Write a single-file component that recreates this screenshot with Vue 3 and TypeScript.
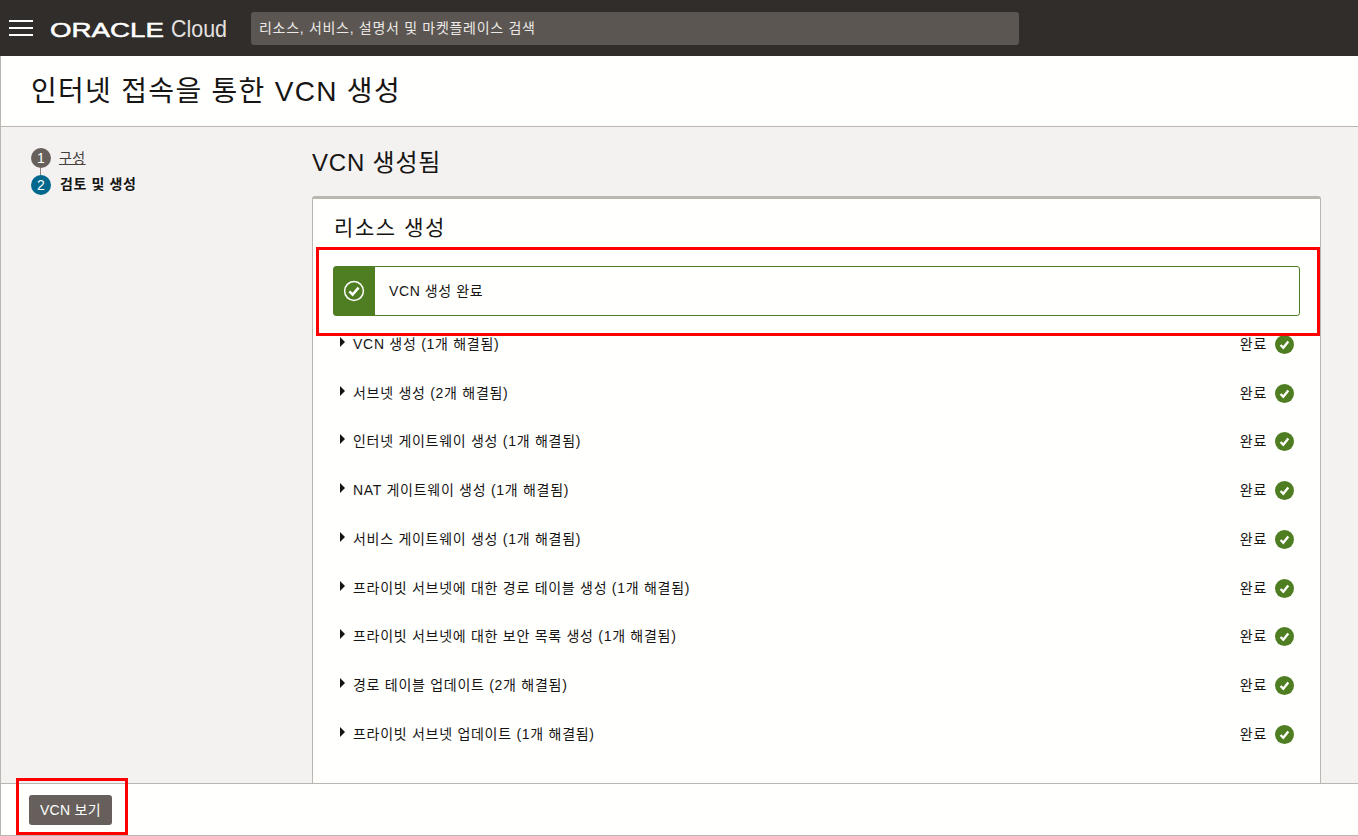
<template>
  <div class="page">
    <header class="topbar">
      <button class="menu-button" type="button" aria-label="메뉴">
        <span></span><span></span><span></span>
      </button>
      <svg class="logo" width="184" height="30" viewBox="0 0 184 30" role="img" aria-label="ORACLE Cloud">
        <text x="0" y="23" textLength="114" lengthAdjust="spacingAndGlyphs" class="logo-oracle">ORACLE</text>
        <text x="121" y="23" textLength="56" lengthAdjust="spacingAndGlyphs" class="logo-cloud">Cloud</text>
      </svg>
      <div class="search">리소스, 서비스, 설명서 및 마켓플레이스 검색</div>
    </header>

    <div class="content">
      <div class="page-title">
        <h1>인터넷 접속을 통한 VCN 생성</h1>
      </div>

      <div class="workspace">
        <nav class="steps">
          <div class="step">
            <span class="step-num done">1</span>
            <a class="step-link">구성</a>
          </div>
          <div class="step-line"></div>
          <div class="step">
            <span class="step-num current">2</span>
            <strong>검토 및 생성</strong>
          </div>
        </nav>

        <main class="main">
          <h2>VCN 생성됨</h2>
          <section class="card">
            <h3>리소스 생성</h3>
            <div class="banner">
              <div class="banner-icon">
                <svg width="22" height="22" viewBox="0 0 22 22" aria-hidden="true">
                  <circle cx="11" cy="11" r="9.4" fill="none" stroke="#fff" stroke-width="1.5" />
                  <path d="M6.4 11.4l3.2 3.2 6-7" fill="none" stroke="#fff" stroke-width="2.5" />
                </svg>
              </div>
              <div class="banner-text">VCN 생성 완료</div>
            </div>
            <ul class="rows">
              <li v-for="row in rows" :key="row" class="row">
                <span class="caret"></span>
                <span class="row-label">{{ row }}</span>
                <span class="row-status">완료</span>
                <svg class="row-check" width="19" height="19" viewBox="0 0 19 19" aria-hidden="true">
                  <circle cx="9.5" cy="9.5" r="9.5" fill="#4f7d21" />
                  <path d="M5.6 10l2.7 2.8 5-6.2" fill="none" stroke="#fff" stroke-width="2.4" />
                </svg>
              </li>
            </ul>
          </section>
        </main>
      </div>

      <footer class="footer">
        <button class="view-button" type="button">VCN 보기</button>
      </footer>
    </div>

    <div class="mark mark-banner"></div>
    <div class="mark mark-button"></div>
  </div>
</template>

<script setup lang="ts">
const rows: string[] = [
  'VCN 생성 (1개 해결됨)',
  '서브넷 생성 (2개 해결됨)',
  '인터넷 게이트웨이 생성 (1개 해결됨)',
  'NAT 게이트웨이 생성 (1개 해결됨)',
  '서비스 게이트웨이 생성 (1개 해결됨)',
  '프라이빗 서브넷에 대한 경로 테이블 생성 (1개 해결됨)',
  '프라이빗 서브넷에 대한 보안 목록 생성 (1개 해결됨)',
  '경로 테이블 업데이트 (2개 해결됨)',
  '프라이빗 서브넷 업데이트 (1개 해결됨)'
]
</script>

<style>
html,
body {
  margin: 0;
  overflow: hidden;
}
</style>

<style scoped>
.page {
  position: relative;
  display: flex;
  flex-direction: column;
  width: 1358px;
  height: 836px;
  overflow: hidden;
  background: #f3f2f1;
  color: #161513;
  font-family: "Liberation Sans", "Noto Sans CJK KR", sans-serif;
}

.topbar {
  display: flex;
  align-items: center;
  flex: 0 0 56px;
  box-sizing: border-box;
  background: #312d2a;
}

.menu-button {
  display: flex;
  flex-direction: column;
  gap: 5px;
  width: 24px;
  margin-left: 9px;
  padding: 0;
  border: none;
  background: none;
}

.menu-button span {
  display: block;
  height: 2px;
  background: #fff;
}

.logo {
  flex: none;
  margin-left: 17px;
  margin-top: 2px;
  margin-right: -6px;
}

.logo-oracle {
  fill: #fff;
  stroke: #fff;
  stroke-width: 0.5;
  font-family: "Liberation Sans", sans-serif;
  font-size: 20px;
}

.logo-cloud {
  fill: #e4e2e0;
  font-family: "Liberation Sans", sans-serif;
  font-size: 24px;
}

.search {
  width: 768px;
  height: 33px;
  box-sizing: border-box;
  margin-left: 23px;
  padding: 0 8px;
  border-radius: 3px;
  background: #5b5652;
  color: #ece9e6;
  font-size: 14px;
  letter-spacing: 0.7px;
  line-height: 33px;
}

.content {
  display: flex;
  flex: 1;
  flex-direction: column;
  min-height: 0;
  border-left: 1px solid #bcb6b1;
}

.page-title {
  flex: 0 0 71px;
  box-sizing: border-box;
  padding-left: 30px;
  padding-top: 1px;
  border-bottom: 1px solid #bcb6b1;
  background: #fffffe;
}

.page-title h1 {
  margin: 0;
  font-size: 28px;
  font-weight: 400;
  letter-spacing: 1.3px;
  line-height: 69px;
}

.workspace {
  display: flex;
  flex: 1;
  min-height: 0;
  overflow: hidden;
}

.steps {
  flex: 0 0 311px;
  box-sizing: border-box;
  padding-top: 21px;
  padding-left: 30px;
  font-size: 14px;
}

.step {
  display: flex;
  align-items: center;
  gap: 8px;
  height: 20px;
}

.step-line {
  width: 1px;
  height: 7px;
  margin-left: 9px;
  background: #8a837d;
}

.step-num {
  display: flex;
  align-items: center;
  justify-content: center;
  width: 20px;
  height: 20px;
  border-radius: 50%;
  color: #fff;
  font-size: 14px;
}

.step-num.done {
  background: #665f5b;
}

.step-num.current {
  background: #00688c;
}

.step-link {
  margin-top: -2px;
  color: #44403c;
  letter-spacing: 0.4px;
  text-decoration: underline;
  text-decoration-skip-ink: none;
}

.step strong {
  margin-top: -4px;
  margin-left: 1px;
  font-size: 14px;
  letter-spacing: 0.6px;
}

.main {
  flex: 0 0 1009px;
  padding-top: 21px;
}

.main h2 {
  margin: 0 0 18px;
  font-size: 24px;
  font-weight: 400;
  letter-spacing: 0.8px;
  line-height: 30px;
}

.card {
  box-sizing: border-box;
  height: 621px;
  padding: 0 20px;
  border: 1px solid #bcb6b1;
  border-top-width: 3px;
  border-radius: 3px;
  background: #fffffe;
}

.card h3 {
  margin: 0;
  padding-top: 15px;
  padding-left: 1px;
  font-size: 21px;
  font-weight: 400;
  letter-spacing: 1.6px;
  line-height: 28px;
}

.banner {
  display: flex;
  width: 967px;
  height: 50px;
  box-sizing: border-box;
  margin-top: 24px;
  border: 1px solid #4f7d21;
  border-radius: 3px;
}

.banner-icon {
  display: flex;
  align-items: center;
  justify-content: center;
  flex: 0 0 41px;
  padding-right: 2px;
  box-sizing: border-box;
  background: #4f7d21;
}

.banner-text {
  padding-left: 14px;
  font-size: 14px;
  letter-spacing: 0.6px;
  line-height: 49px;
}

.rows {
  width: 961px;
  margin: 2.5px 0 0;
  padding: 0;
  list-style: none;
}

.row {
  display: flex;
  align-items: center;
  height: 48.75px;
  padding-left: 7px;
  font-size: 14px;
  letter-spacing: 0.72px;
}

.caret {
  width: 0;
  height: 0;
  margin-right: 8px;
  margin-top: -2px;
  border-top: 5px solid transparent;
  border-bottom: 5px solid transparent;
  border-left: 5px solid #161513;
}

.row-label {
  flex: 1;
}

.row-status {
  margin-right: 8px;
}

.row-check {
  margin-top: 3px;
}

.footer {
  display: flex;
  align-items: center;
  flex: 0 0 53px;
  box-sizing: border-box;
  padding-left: 28px;
  padding-top: 1px;
  border-top: 1px solid #bcb6b1;
  border-bottom: 1px solid #bcb6b1;
  background: #fffffe;
}

.view-button {
  height: 30px;
  padding: 0 11px 2px;
  border: none;
  border-radius: 3px;
  background: #665f5b;
  color: #fff;
  font-family: inherit;
  font-size: 14px;
  letter-spacing: 0.28px;
}

.mark {
  position: absolute;
  box-sizing: border-box;
  border: 3px solid #f00;
}

.mark-banner {
  left: 316px;
  top: 247px;
  width: 1004px;
  height: 89px;
}

.mark-button {
  left: 16px;
  top: 778px;
  width: 112px;
  height: 57px;
}
</style>
